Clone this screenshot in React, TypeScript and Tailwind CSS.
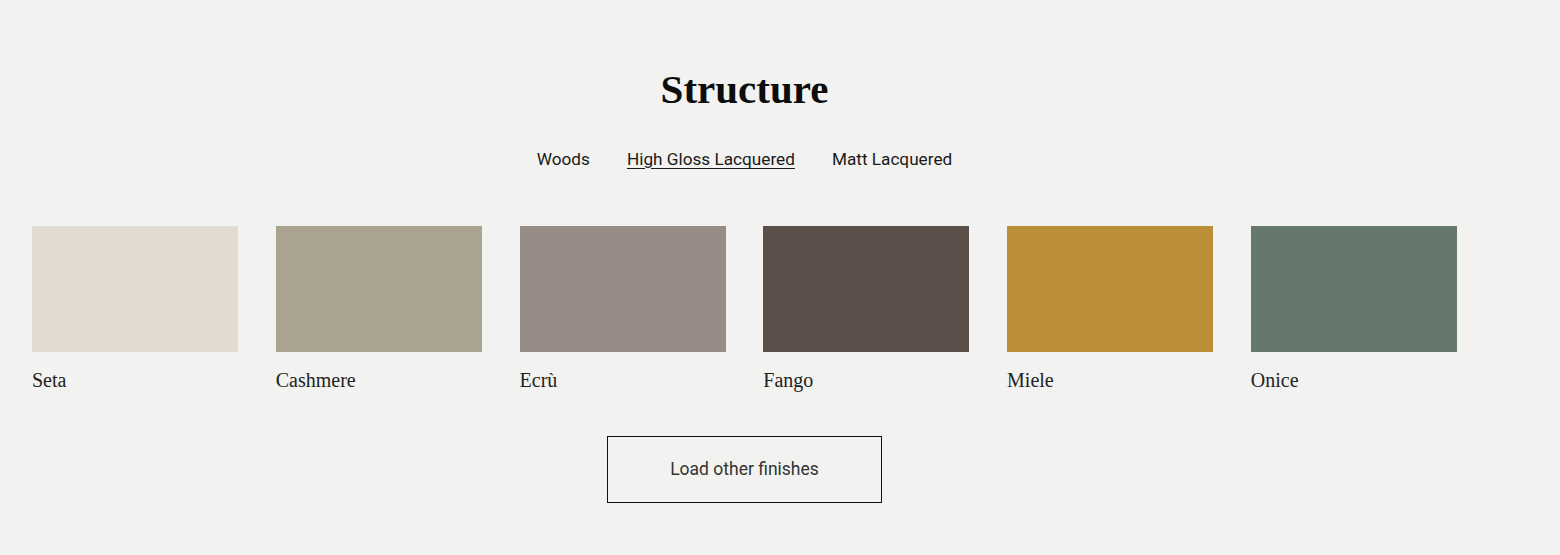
const finishes = [
  { name: "Seta", color: "bg-[#e2dbd1]" },
  { name: "Cashmere", color: "bg-[#aba391]" },
  { name: "Ecrù", color: "bg-[#978b85]" },
  { name: "Fango", color: "bg-[#5b4f4a]" },
  { name: "Miele", color: "bg-[#bb8e38]" },
  { name: "Onice", color: "bg-[#66776e]" },
]

const tabs = ["Woods", "High Gloss Lacquered", "Matt Lacquered"]

export default function App() {
  return (
    <div className="min-h-[555px] w-full bg-[#f2f2f0] pt-[66px]">
      <div className="ml-[32px] flex w-[1425px] flex-col items-center">

        {/* Heading */}

        <h2 className="font-['Liberation_Serif',serif] text-[41px] font-bold leading-[46px] text-[#0d0d0d]">
          Structure
        </h2>

        {/* Tabs */}

        <div className="mt-[35px] flex items-center gap-[37px] font-['Roboto',sans-serif] text-[17.2px] leading-[24px] text-[#1a1a1a]">
          {tabs.map((tab) => (
            <button
              key={tab}
              className={tab === "High Gloss Lacquered" ? "underline underline-offset-[3px]" : ""}
            >
              {tab}
            </button>
          ))}
        </div>

        {/* Swatches */}

        <div className="mt-[55px] grid w-full grid-cols-6 gap-x-[37.6px]">
          {finishes.map((f) => (
            <div key={f.name} className="flex flex-col">
              <div className={`h-[126px] w-full ${f.color}`} />
              <span className="mt-[15px] font-['Liberation_Serif',serif] text-[20px] leading-[26px] text-[#222]">
                {f.name}
              </span>
            </div>
          ))}
        </div>

        {/* Load more */}

        <button className="mt-[43px] h-[67px] w-[275px] border border-[#111] font-['Roboto',sans-serif] text-[17.5px] text-[#333]">
          Load other finishes
        </button>

      </div>
    </div>
  )
}
